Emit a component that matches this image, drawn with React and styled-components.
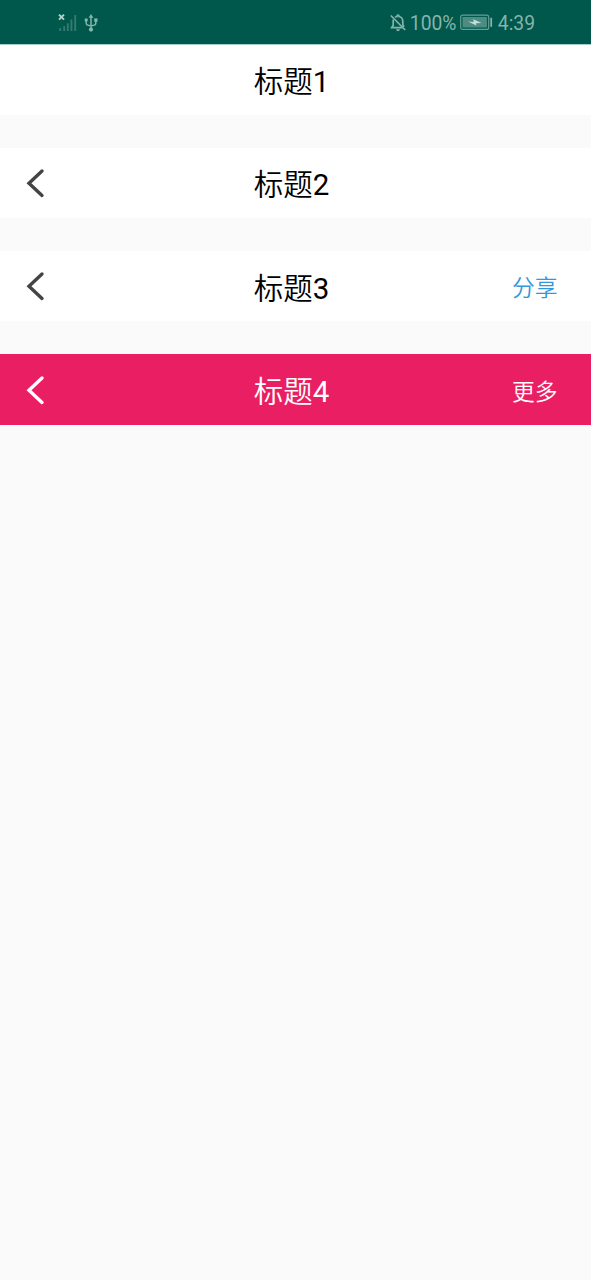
import React from "react";
import styled, { createGlobalStyle } from "styled-components";

const GlobalStyle = createGlobalStyle`
  * { box-sizing: border-box; }
  body {
    margin: 0;
    background: #fafafa;
    font-family: Roboto, "Noto Sans CJK SC DemiLight", "Noto Sans CJK SC", sans-serif;
  }
`;

const Screen = styled.main`
  min-height: 1280px;
  background: #fafafa;
`;

const StatusBar = styled.header`
  position: relative;
  display: flex;
  align-items: center;
  justify-content: space-between;
  height: 44.2px;
  padding: 1px 56px 0 57px;
  background: #00574b;
  box-shadow: 0 1px 0 #a9cfc9;
  color: #84b5ad;
  font-size: 19.3px;
  line-height: 24px;
`;

const StatusGroup = styled.div`
  display: flex;
  align-items: center;
  gap: ${(p) => p.$gap || "0"};

  svg { display: block; flex: none; }
`;

const Percent = styled.span`
  width: 46px;
  margin: 0 4px 0 4px;
  padding-top: 2px;
  white-space: nowrap;
`;

const Clock = styled.span`
  margin-left: 5px;
  padding-top: 2px;
`;

const BarList = styled.div`
  display: flex;
  flex-direction: column;
  gap: 32.9px;
`;

const Bar = styled.nav`
  display: grid;
  grid-template-columns: 120px 1fr 120px;
  align-items: center;
  height: 70.5px;
  background: ${(p) => p.$background || "#ffffff"};
  color: ${(p) => p.$color || "#000000"};
`;

const BackButton = styled.button`
  display: flex;
  justify-self: start;
  padding: 0 0 0 24px;
  border: 0;
  background: none;
  color: ${(p) => p.$color};
`;

const Title = styled.h1`
  grid-column: 2;
  margin: 0;
  padding: 5px 8px 0 0;
  font-size: 29.5px;
  font-weight: 400;
  line-height: 40px;
  text-align: center;
`;

const Action = styled.button`
  justify-self: end;
  padding: 2px 33.5px 0 0;
  border: 0;
  background: none;
  color: ${(p) => p.$color};
  font-family: "Noto Sans CJK SC DemiLight", "Noto Sans CJK SC", sans-serif;
  font-size: 22.8px;
  font-weight: 400;
  line-height: 32px;
`;

const SignalIcon = () => (
  <svg width="20" height="20" viewBox="0 0 20 20">
    <path d="M2 1.6l5 5M7 1.6l-5 5" stroke="#b0d2cc" strokeWidth="2" />
    <path d="M3.2 15v3M7.2 13v5M10.8 10.3V18" stroke="#347c72" strokeWidth="1.9" />
    <path d="M14.4 6.5V18M18.2 2V18" stroke="#347c72" strokeWidth="1.9" />
  </svg>
);

const UsbIcon = () => (
  <svg width="14" height="18" viewBox="0 0 14 18" fill="none" stroke="#84b5ad" strokeWidth="1.5">
    <path d="M7 3v12M2.2 6v3.2q0 1.5 1.5 1.9L7 12l3.3-.9q1.5-.4 1.5-1.9V6" />
    <path d="M7 0l2.4 3.8H4.6z" fill="#84b5ad" stroke="none" />
    <circle cx="7" cy="15.6" r="2.1" fill="#84b5ad" stroke="none" />
    <circle cx="2.2" cy="6" r="1.7" fill="#84b5ad" stroke="none" />
    <path d="M10.2 4.4h3.3v3.3h-3.3z" fill="#84b5ad" stroke="none" />
  </svg>
);

const MutedBellIcon = () => (
  <svg width="16" height="18" viewBox="0 0 16 18" fill="none" stroke="#84b5ad" strokeWidth="1.7">
    <path d="M3.2 5.5v5.7L1.7 13.7h10.7M5 3.4Q5.8 2.7 7 2.5 7 1 8 1t1 1.5q3.8.8 3.8 5v3.3l1.2 2" />
    <path d="M.8 1.5l14.4 14.5" />
    <path d="M6 15.2h4q-.5 2-2 2t-2-2z" fill="#84b5ad" stroke="none" />
  </svg>
);

const BatteryIcon = () => (
  <svg width="33" height="17" viewBox="0 0 33 17">
    <rect x=".7" y="1.2" width="28" height="14.2" rx="2" fill="none" stroke="#62a097" strokeWidth="1.2" />
    <rect x="2.5" y="3" width="24.4" height="10.6" rx=".5" fill="#4c8c82" />
    <path d="M8 7.5l5.6.4-.3-2.7 8.4 3.7-5.6.3.3 2.4z" fill="#c1ded9" />
    <path d="M31.2 3.8v9" stroke="#84b5ad" strokeWidth="1.8" />
  </svg>
);

const BackIcon = () => (
  <svg width="24" height="32" viewBox="0 0 24 32" fill="none" stroke="currentColor" strokeWidth="3.4" strokeLinecap="round" strokeLinejoin="miter">
    <path d="M18 4L5 16.2 18 28.4" />
  </svg>
);

const TitleBar = ({ title, background, color, backColor, action, actionColor }) => (
  <Bar $background={background} $color={color}>
    {backColor && (
      <BackButton $color={backColor} aria-label="返回">
        <BackIcon />
      </BackButton>
    )}
    <Title>{title}</Title>
    {action && <Action $color={actionColor}>{action}</Action>}
  </Bar>
);

export default function App() {
  return (
    <Screen>
      <GlobalStyle />
      <StatusBar>
        <StatusGroup $gap="7px">
          <SignalIcon />
          <UsbIcon />
        </StatusGroup>
        <StatusGroup>
          <MutedBellIcon />
          <Percent>100%</Percent>
          <BatteryIcon />
          <Clock>4:39</Clock>
        </StatusGroup>
      </StatusBar>
      <BarList>
        <TitleBar title="标题1" />
        <TitleBar title="标题2" backColor="#444444" />
        <TitleBar title="标题3" backColor="#444444" action="分享" actionColor="#3398db" />
        <TitleBar
          title="标题4"
          background="#e91e63"
          color="#ffffff"
          backColor="#ffffff"
          action="更多"
          actionColor="#ffffff"
        />
      </BarList>
    </Screen>
  );
}
